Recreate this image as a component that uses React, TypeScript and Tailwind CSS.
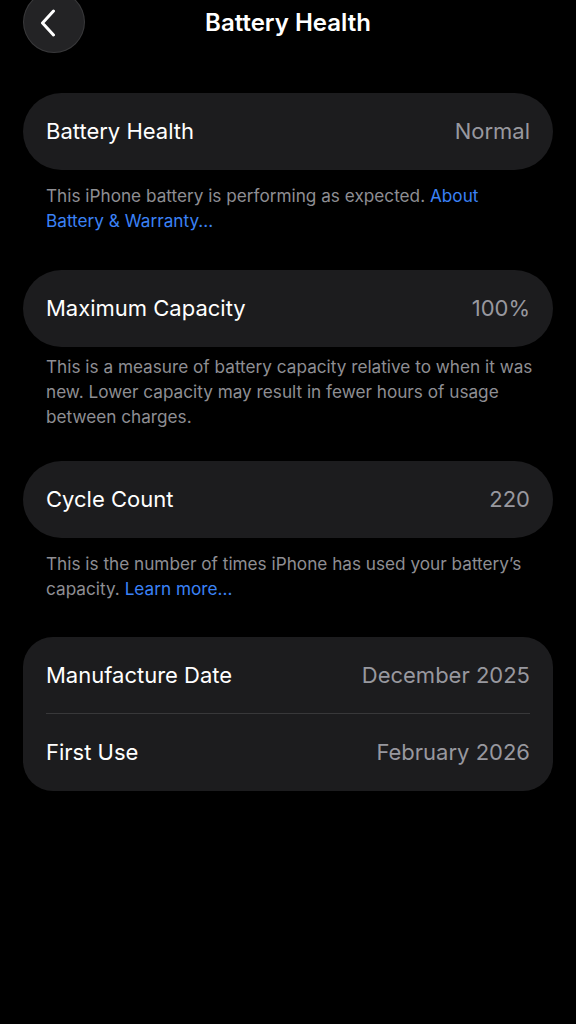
import { ReactNode } from 'react'

const font = { fontFamily: 'Inter, "Noto Sans", sans-serif' }

function Row({ label, value }: { label: string; value: string }) {
  return (
    <div className="flex h-[77px] items-center justify-between px-[23px]">
      <span className="text-[22px] text-white">{label}</span>
      <span className="text-[22px] text-[#98989f]">{value}</span>
    </div>
  )
}

function Footer({ children, className }: { children: ReactNode; className: string }) {
  return (
    <p className={`pl-[23px] pr-[16px] text-[17.2px] leading-[25px] text-[#8e8e93] ${className}`}>
      {children}
    </p>
  )
}

export default function App() {
  return (
    <div className="min-h-[1024px] overflow-hidden bg-black px-[23px]" style={font}>
      {/* header */}
      <div className="-mt-[9px] grid grid-cols-[62px_1fr_62px] items-center">
        <button className="flex h-[62px] w-[62px] items-center justify-center rounded-full border border-white/10 bg-[#232325]">
          <svg width="22" height="28" viewBox="0 0 22 28" fill="none" className="mt-[2px] -ml-[13px]">
            <path d="M16.5 2 L5.5 14 L16.5 26" stroke="white" strokeWidth="3" strokeLinecap="round" strokeLinejoin="round" />
          </svg>
        </button>
        <h1 className="mt-[2px] text-center text-[24px] font-semibold text-white">Battery Health</h1>
        <div />
      </div>

      <div className="mt-[40px] rounded-full bg-[#1c1c1e]">
        <Row label="Battery Health" value="Normal" />
      </div>
      <Footer className="mt-[13px]">
        This iPhone battery is performing as expected.{' '}
        <span className="text-[#3b82f6]">About Battery &amp; Warranty...</span>
      </Footer>

      <div className="mt-[37px] rounded-full bg-[#1c1c1e]">
        <Row label="Maximum Capacity" value="100%" />
      </div>
      <Footer className="mt-[7px]">
        This is a measure of battery capacity relative to when it was new. Lower capacity may
        result in fewer hours of usage between charges.
      </Footer>

      <div className="mt-[32px] rounded-full bg-[#1c1c1e]">
        <Row label="Cycle Count" value="220" />
      </div>
      <Footer className="mt-[13px]">
        This is the number of times iPhone has used your battery’s capacity.{' '}
        <span className="text-[#3b82f6]">Learn more...</span>
      </Footer>

      <div className="mt-[36px] rounded-[30px] bg-[#1c1c1e]">
        <div className="flex h-[76px] items-center justify-between px-[23px]">
          <span className="text-[22px] text-white">Manufacture Date</span>
          <span className="text-[22px] text-[#98989f]">December 2025</span>
        </div>
        <div className="mx-[23px] h-px bg-[#38383a]" />
        <Row label="First Use" value="February 2026" />
      </div>
    </div>
  )
}
